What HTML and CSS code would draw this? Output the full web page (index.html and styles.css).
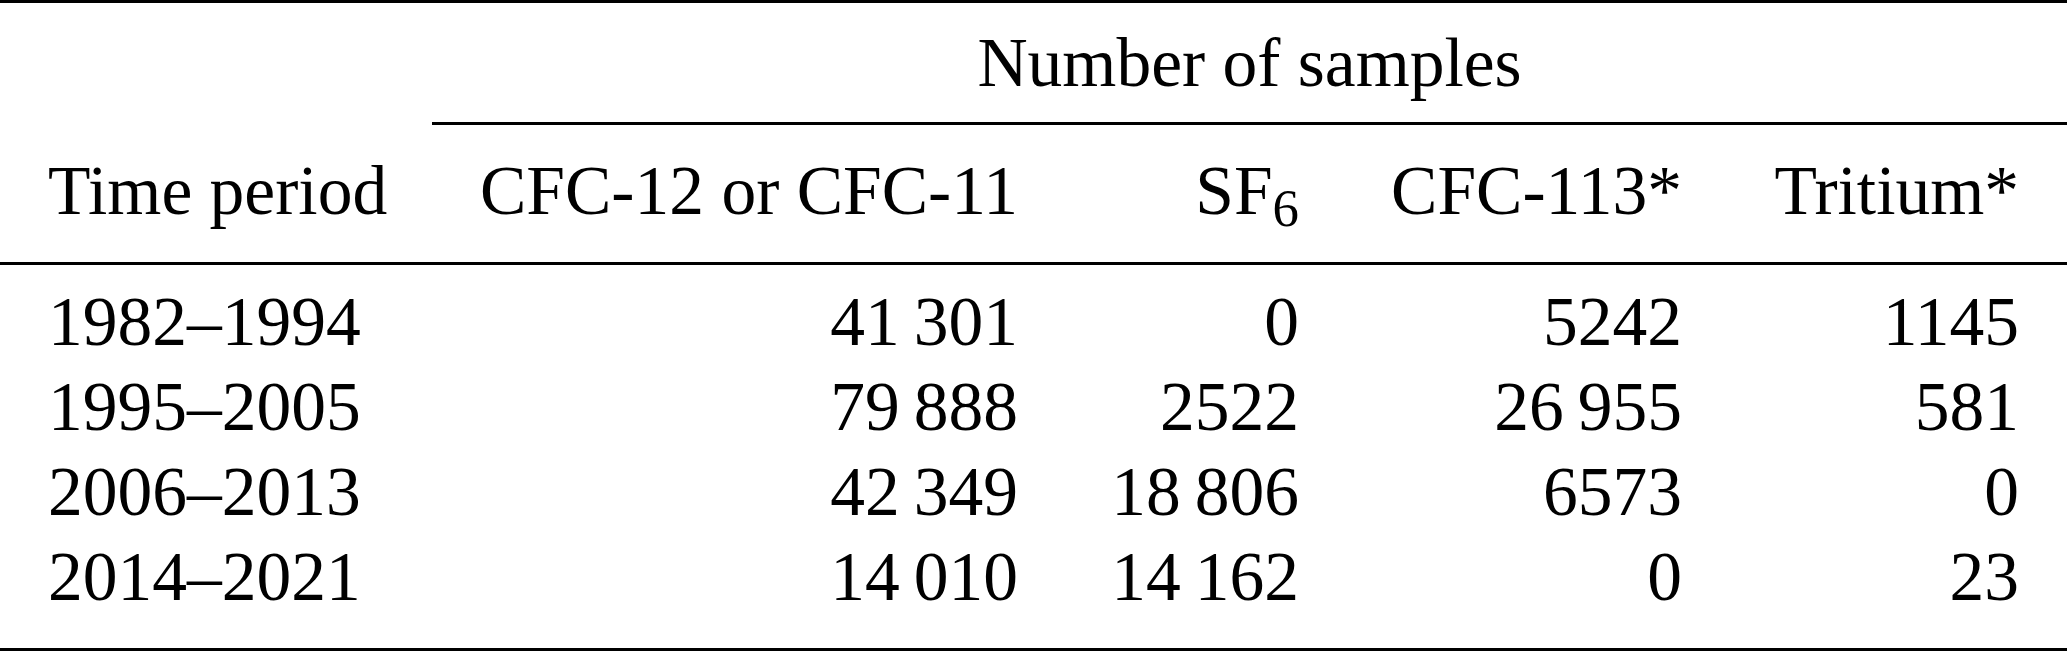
FILE: index.html
```html
<!DOCTYPE html>
<html lang="en">

<head>
    <meta charset="UTF-8">
    <meta name="viewport" 
          content="width=device-width, 
                    initial-scale=1.0">
    <title>Number of samples per time period</title>
    <link rel="stylesheet" href="styles.css">
</head>

<body>
    <table class="samples">
        <colgroup>
            <col class="col-period">
            <col class="col-cfc12">
            <col class="col-sf6">
            <col class="col-cfc113">
            <col class="col-tritium">
        </colgroup>
        <thead>
            <tr class="group-row">
                <th class="blank"></th>
                <th class="group" colspan="4">Number of samples</th>
            </tr>
            <tr class="head-row">
                <th class="period">Time period</th>
                <th>CFC-12 or CFC-11</th>
                <th>SF<sub>6</sub></th>
                <th>CFC-113*</th>
                <th>Tritium*</th>
            </tr>
        </thead>
        <tbody>
            <tr>
                <td class="period">1982–1994</td>
                <td>41&thinsp;301</td>
                <td>0</td>
                <td>5242</td>
                <td>1145</td>
            </tr>
            <tr>
                <td class="period">1995–2005</td>
                <td>79&thinsp;888</td>
                <td>2522</td>
                <td>26&thinsp;955</td>
                <td>581</td>
            </tr>
            <tr>
                <td class="period">2006–2013</td>
                <td>42&thinsp;349</td>
                <td>18&thinsp;806</td>
                <td>6573</td>
                <td>0</td>
            </tr>
            <tr>
                <td class="period">2014–2021</td>
                <td>14&thinsp;010</td>
                <td>14&thinsp;162</td>
                <td>0</td>
                <td>23</td>
            </tr>
        </tbody>
    </table>
</body>

</html>
```

FILE: styles.css
```css
* {
    margin: 0;
    padding: 0;
    box-sizing: border-box;
}

body {
    font-family: "Liberation Serif", "Times New Roman", serif;
    background-color: #fff;
    color: #000;
}

.samples {
    width: 2067px;
    table-layout: fixed;
    border-collapse: separate;
    border-spacing: 0;
    font-size: 69.5px;
    line-height: 85px;
}

.col-period {
    width: 432px;
}

.col-cfc12 {
    width: 630px;
}

.col-sf6 {
    width: 281px;
}

.col-cfc113 {
    width: 383px;
}

.col-tritium {
    width: 341px;
}

.samples th,
.samples td {
    font-weight: normal;
    text-align: right;
    padding: 0 44px 0 48px;
    white-space: nowrap;
}

.samples th:last-child,
.samples td:last-child {
    padding-right: 48px;
}

.samples .period {
    text-align: left;
}

/* top rule + spanning header */
.group-row th {
    border-top: 3px solid #000;
    padding-top: 17px;
    padding-bottom: 17px;
}

.group-row .group {
    text-align: center;
    padding-right: 48px;
    border-bottom: 3px solid #000;
}

/* column headers + mid rule */
.head-row th {
    padding-top: 23px;
    padding-bottom: 29px;
    border-bottom: 3px solid #000;
}

.samples sub {
    font-size: 0.76em;
    line-height: 0;
    vertical-align: -0.22em;
}

tbody tr:first-child td {
    padding-top: 14px;
}

/* bottom rule */
tbody tr:last-child td {
    padding-bottom: 29px;
    border-bottom: 3px solid #000;
}
```
